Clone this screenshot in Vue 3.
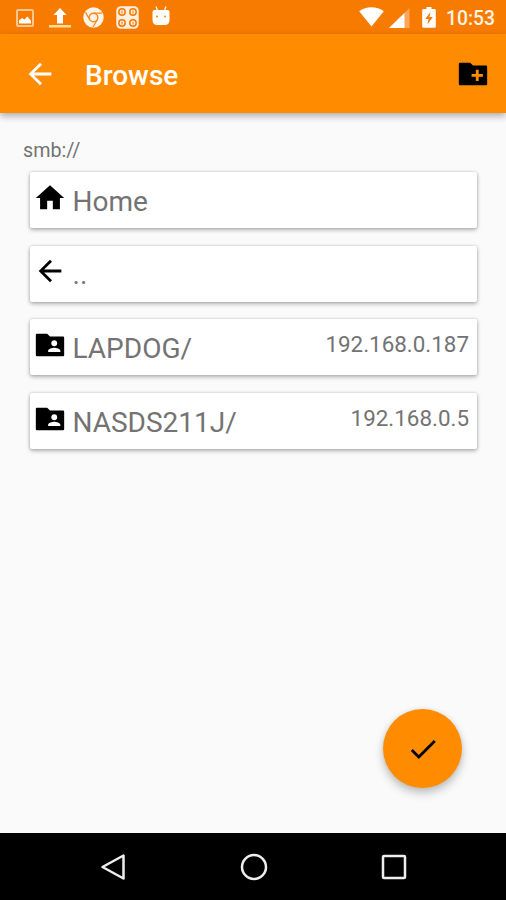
<script setup>
const rows = [
  { name: 'Home', icon: 'home', host: '' },
  { name: '..', icon: 'back', host: '' },
  { name: 'LAPDOG/', icon: 'shared', host: '192.168.0.187' },
  { name: 'NASDS211J/', icon: 'shared', host: '192.168.0.5' },
]
const paths = {
  home: 'M10 20v-6h4v6h5v-8h3L12 3 2 12h3v8z',
  back: 'M20 11H7.83l5.59-5.59L12 4l-8 8 8 8 1.41-1.41L7.83 13H20v-2z',
  shared:
    'M21.200 6H12l-2-2H2.800Q2 4 2 4.800V19.200Q2 20 2.800 20H21.200Q22 20 22 19.200V6.800Q22 6 21.200 6zM15 8.600c1.200 0 2.100.9 2.100 2.100s-.9 2.100-2.100 2.100-2.100-.9-2.100-2.100.9-2.100 2.100-2.100zM19.300 17h-8.600v-1c0-1.400 2.900-2.100 4.300-2.100s4.300.7 4.300 2.100z',
  create:
    'M21.200 6H12l-2-2H2.800Q2 4 2 4.800V19.200Q2 20 2.800 20H21.200Q22 20 22 19.200V6.800Q22 6 21.200 6zM19 14h-3v3h-2v-3h-3v-2h3V9h2v3h3z',
  check: 'M9 16.17L4.83 12l-1.42 1.41L9 19 21 7l-1.41-1.41z',
}
</script>

<template>
  <div class="screen">
    <header class="status">
      <div class="notices">
        <svg class="n-image" width="18" height="18" viewBox="0 0 18 18">
          <rect x="1" y="1" width="16" height="16" rx="1" fill="none" stroke="#ffc690" stroke-width="2" />
          <path d="M3 14.500V11.500l3-2.600 2.400 1.700 3-3.200 3.600 4.400v2.700z" fill="#fff" />
        </svg>
        <svg class="n-upload" width="22" height="20" viewBox="0 0 22 20">
          <path d="M11 0l6.500 7H14v8.500H8V7H4.500z" fill="#fff" />
          <path d="M0 17h22v2.500H0z" fill="#ffdf9c" />
        </svg>
        <svg class="n-chrome" width="21" height="21" viewBox="0 0 21 21">
          <circle cx="10.500" cy="10.500" r="10.200" fill="#fff3e5" />
          <circle cx="10.500" cy="10.500" r="4.300" fill="none" stroke="#f98a22" stroke-width="1.400" />
          <path d="M10.500 6.200H19M6.800 12.700L2.500 5.300M14.200 12.700L10 20" stroke="#f98a22" stroke-width="1.300" fill="none" />
        </svg>
        <svg class="n-grid" width="23" height="23" viewBox="0 0 23 23">
          <rect x=".3" y=".3" width="22.400" height="22.400" rx="4.500" fill="#ffefdd" />
          <g fill="none" stroke="#f47a0a" stroke-width="1.500">
            <circle cx="6" cy="6" r="3.200" /><circle cx="17" cy="6" r="3.200" />
            <circle cx="6" cy="17" r="3.200" /><circle cx="17" cy="17" r="3.200" />
          </g>
          <path d="M6 4.500v3M17 4.500v3M6 15.500v3M17 15.500v3" stroke="#f47a0a" stroke-width="1" />
        </svg>
        <svg class="n-android" width="18" height="20" viewBox="0 0 18 20">
          <path d="M4 .5l1.500 4M14 .5l-1.500 4" stroke="#fff" stroke-width="1.200" />
          <path d="M.5 6q0-2 2-2h13q2 0 2 2v8q0 5-5 5H5.500q-5 0-5-5z" fill="#fff" />
          <circle cx="5" cy="10.500" r=".9" fill="#f57c00" /><circle cx="13" cy="10.500" r=".9" fill="#f57c00" />
        </svg>
      </div>
      <div class="system">
        <svg class="wifi" width="25" height="20" viewBox="0 0 25 20">
          <path d="M.2 4.300C7-1.200 18-1.200 24.800 4.300L12.500 19.500z" fill="#fff" />
        </svg>
        <svg class="signal" width="21" height="20" viewBox="0 0 21 20">
          <path d="M0 20L20.500 0v20z" fill="#fba65a" />
          <path d="M0 20L15.500 5v15z" fill="#fff" />
        </svg>
        <svg class="battery" width="14" height="21" viewBox="0 0 14 21">
          <path d="M4.500 0h5v2H12.500q1.300 0 1.300 1.300V19.500q0 1.300-1.300 1.300H1.500Q.2 20.800.2 19.500V3.300Q.2 2 1.500 2h3z" fill="#fff" />
          <path d="M8.500 5l-5.300 7h3.300l-1 5.500L10.800 10H7.500z" fill="#f57c00" />
        </svg>
        <span class="clock">10:53</span>
      </div>
    </header>

    <div class="appbar">
      <svg class="icon nav" viewBox="0 0 24 24"><path :d="paths.back" /></svg>
      <h1>Browse</h1>
      <svg class="icon" viewBox="0 0 24 24"><path :d="paths.create" /></svg>
    </div>

    <main>
      <p class="path">smb://</p>
      <ul>
        <li v-for="row in rows" :key="row.name">
          <svg class="icon" viewBox="0 0 24 24"><path :d="paths[row.icon]" /></svg>
          <span class="name">{{ row.name }}</span>
          <span class="host">{{ row.host }}</span>
        </li>
      </ul>
      <button class="fab" aria-label="Confirm">
        <svg viewBox="0 0 24 24"><path :d="paths.check" /></svg>
      </button>
    </main>

    <nav class="keys">
      <svg width="28" height="28" viewBox="0 0 28 28"><path d="M3.500 14L24.500 2.500v23z" /></svg>
      <svg width="28" height="28" viewBox="0 0 28 28"><circle cx="14" cy="14" r="12" /></svg>
      <svg width="28" height="28" viewBox="0 0 28 28"><rect x="3" y="3" width="22" height="22" rx="1" /></svg>
    </nav>
  </div>
</template>

<style>
body {
  margin: 0;
}
</style>

<style scoped>
.screen {
  width: 506px;
  height: 900px;
  display: flex;
  flex-direction: column;
  overflow: hidden;
  background: #fafafa;
  font-family: Roboto, sans-serif;
}
svg {
  display: block;
  flex: none;
}
.status {
  height: 34px;
  flex: none;
  display: flex;
  justify-content: space-between;
  background: #f77b00;
  padding: 0 11px 0 16px;
}
.notices,
.system {
  display: flex;
  align-items: flex-start;
}
.n-image { margin-top: 9px; }
.n-upload { margin: 8px 0 0 15px; }
.n-chrome { margin: 7px 0 0 12px; }
.n-grid { margin: 6px 0 0 12px; }
.n-android { margin: 6px 0 0 13px; }
.wifi { margin-top: 7px; }
.signal { margin: 8px 0 0 5px; }
.battery { margin: 7px 0 0 12px; }
.clock {
  margin: 7px 0 0 10px;
  font-size: 19.3px;
  line-height: 24px;
  font-weight: 500;
  color: #fff3e6;
}
.appbar {
  height: 79px;
  flex: none;
  display: flex;
  align-items: center;
  box-sizing: border-box;
  padding: 0 16px 0 23px;
  background: #ff8c00;
  box-shadow: 0 3px 7px rgba(0, 0, 0, 0.32);
}
.icon {
  width: 34px;
  height: 34px;
  fill: #000;
}
.nav {
  fill: #fff;
}
h1 {
  flex: 1;
  margin: 4px 0 0 28px;
  font-size: 28px;
  line-height: 34px;
  font-weight: 500;
  color: #fff;
}
main {
  flex: 1;
  display: flex;
  flex-direction: column;
  padding: 0 29px 45px 30px;
}
.path {
  margin: 26px 0 9.8px -7px;
  font-size: 19.7px;
  line-height: 23px;
  color: #737373;
}
ul {
  margin: 0;
  padding: 0;
  list-style: none;
  display: flex;
  flex-direction: column;
  gap: 17.8px;
}
li {
  height: 56px;
  box-sizing: border-box;
  display: flex;
  align-items: flex-start;
  padding: 8.9px 8px 0 2.5px;
  background: #fff;
  border-radius: 2px;
  box-shadow: 0 2px 4px rgba(0, 0, 0, 0.28), 0 0 3px rgba(0, 0, 0, 0.18);
}
.name {
  flex: 1;
  margin: 4px 0 0 6px;
  font-size: 28px;
  line-height: 33px;
  color: #737373;
}
.host {
  margin-top: 3px;
  font-size: 22.4px;
  line-height: 26px;
  color: #737373;
}
.fab {
  width: 79px;
  height: 79px;
  margin: auto 15px 0 0;
  align-self: flex-end;
  display: flex;
  align-items: center;
  justify-content: center;
  padding: 0;
  border: 0;
  border-radius: 50%;
  background: #ff8c00;
  box-shadow: 0 5px 10px rgba(0, 0, 0, 0.24), 0 0 5px rgba(0, 0, 0, 0.08);
}
.fab svg {
  width: 34px;
  height: 34px;
}
.keys {
  height: 67px;
  flex: none;
  display: flex;
  align-items: center;
  justify-content: space-between;
  box-sizing: border-box;
  padding: 0 98px 0 99px;
  background: #000;
}
.keys svg {
  fill: none;
  stroke: #eee;
  stroke-width: 2.5;
  stroke-linejoin: round;
}
</style>
